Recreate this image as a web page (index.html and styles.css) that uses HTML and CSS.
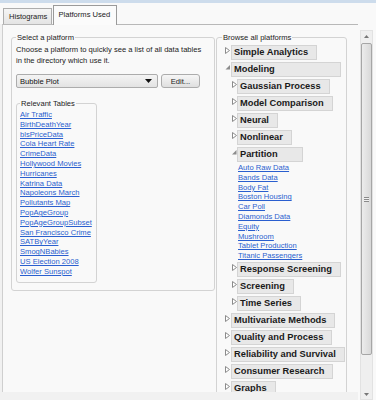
FILE: index.html
```html
<!DOCTYPE html>
<html lang="en">
<head>
    <meta charset="UTF-8">
    <title>Platforms Used</title>
    <link rel="stylesheet" href="styles.css">
</head>
<body>
    <div class="top-strip"></div>
    <div class="window">
        <div class="main">
            <div class="tabs">
                <div class="tab">Histograms</div>
                <div class="tab active">Platforms Used</div>
            </div>
            <div class="panel">
                <fieldset class="select-box">
                    <legend>Select a platform</legend>
                    <p class="intro">Choose a platform to quickly see a list of all data tables in the directory which use it.</p>
                    <div class="combo-row">
                        <div class="combo">
                            <span>Bubble Plot</span>
                            <svg width="7" height="4" viewBox="0 0 7 4"><path d="M0 0 L7 0 L3.5 4 Z" fill="#111"/></svg>
                        </div>
                        <button class="edit-button">Edit...</button>
                    </div>
                    <fieldset class="tables">
                        <legend>Relevant Tables</legend>
                        <ul class="links">
                            <li><a href="#">Air Traffic</a></li>
                            <li><a href="#">BirthDeathYear</a></li>
                            <li><a href="#">blsPriceData</a></li>
                            <li><a href="#">Cola Heart Rate</a></li>
                            <li><a href="#">CrimeData</a></li>
                            <li><a href="#">Hollywood Movies</a></li>
                            <li><a href="#">Hurricanes</a></li>
                            <li><a href="#">Katrina Data</a></li>
                            <li><a href="#">Napoleons March</a></li>
                            <li><a href="#">Pollutants Map</a></li>
                            <li><a href="#">PopAgeGroup</a></li>
                            <li><a href="#">PopAgeGroupSubset</a></li>
                            <li><a href="#">San Francisco Crime</a></li>
                            <li><a href="#">SATByYear</a></li>
                            <li><a href="#">SmogNBabies</a></li>
                            <li><a href="#">US Election 2008</a></li>
                            <li><a href="#">Wolfer Sunspot</a></li>
                        </ul>
                    </fieldset>
                </fieldset>

                <fieldset class="browse">
                    <legend>Browse all platforms</legend>
                    <ul class="tree">
                        <li class="node">
                            <span class="twisty"><svg width="6" height="9" viewBox="0 0 6 9"><path d="M0.5 1.5 L4.5 4.5 L0.5 7.5 Z" fill="#fff" stroke="#8c8c8c"/></svg></span>
                            <span class="head">Simple Analytics</span>
                        </li>
                        <li class="node">
                            <span class="twisty"><svg width="6" height="9" viewBox="0 0 6 9"><path d="M5 2 L5 6.5 L0.5 6.5 Z" fill="#8c8c8c"/></svg></span>
                            <span class="head">Modeling</span>
                            <ul class="tree">
                                <li class="node">
                                    <span class="twisty"><svg width="6" height="9" viewBox="0 0 6 9"><path d="M1.5 1.5 L5.5 4.5 L1.5 7.5 Z" fill="#fff" stroke="#8c8c8c"/></svg></span>
                                    <span class="head">Gaussian Process</span>
                                </li>
                                <li class="node">
                                    <span class="twisty"><svg width="6" height="9" viewBox="0 0 6 9"><path d="M1.5 1.5 L5.5 4.5 L1.5 7.5 Z" fill="#fff" stroke="#8c8c8c"/></svg></span>
                                    <span class="head">Model Comparison</span>
                                </li>
                                <li class="node">
                                    <span class="twisty"><svg width="6" height="9" viewBox="0 0 6 9"><path d="M1.5 1.5 L5.5 4.5 L1.5 7.5 Z" fill="#fff" stroke="#8c8c8c"/></svg></span>
                                    <span class="head">Neural</span>
                                </li>
                                <li class="node">
                                    <span class="twisty"><svg width="6" height="9" viewBox="0 0 6 9"><path d="M1.5 1.5 L5.5 4.5 L1.5 7.5 Z" fill="#fff" stroke="#8c8c8c"/></svg></span>
                                    <span class="head">Nonlinear</span>
                                </li>
                                <li class="node">
                                    <span class="twisty"><svg width="6" height="9" viewBox="0 0 6 9"><path d="M5.5 2 L5.5 6.5 L1 6.5 Z" fill="#8c8c8c"/></svg></span>
                                    <span class="head">Partition</span>
                                    <ul class="links tree-links">
                                        <li><a href="#">Auto Raw Data</a></li>
                                        <li><a href="#">Bands Data</a></li>
                                        <li><a href="#">Body Fat</a></li>
                                        <li><a href="#">Boston Housing</a></li>
                                        <li><a href="#">Car Poll</a></li>
                                        <li><a href="#">Diamonds Data</a></li>
                                        <li><a href="#">Equity</a></li>
                                        <li><a href="#">Mushroom</a></li>
                                        <li><a href="#">Tablet Production</a></li>
                                        <li><a href="#">Titanic Passengers</a></li>
                                    </ul>
                                </li>
                                <li class="node">
                                    <span class="twisty"><svg width="6" height="9" viewBox="0 0 6 9"><path d="M1.5 1.5 L5.5 4.5 L1.5 7.5 Z" fill="#fff" stroke="#8c8c8c"/></svg></span>
                                    <span class="head">Response Screening</span>
                                </li>
                                <li class="node">
                                    <span class="twisty"><svg width="6" height="9" viewBox="0 0 6 9"><path d="M1.5 1.5 L5.5 4.5 L1.5 7.5 Z" fill="#fff" stroke="#8c8c8c"/></svg></span>
                                    <span class="head">Screening</span>
                                </li>
                                <li class="node">
                                    <span class="twisty"><svg width="6" height="9" viewBox="0 0 6 9"><path d="M1.5 1.5 L5.5 4.5 L1.5 7.5 Z" fill="#fff" stroke="#8c8c8c"/></svg></span>
                                    <span class="head">Time Series</span>
                                </li>
                            </ul>
                        </li>
                        <li class="node">
                            <span class="twisty"><svg width="6" height="9" viewBox="0 0 6 9"><path d="M0.5 1.5 L4.5 4.5 L0.5 7.5 Z" fill="#fff" stroke="#8c8c8c"/></svg></span>
                            <span class="head">Multivariate Methods</span>
                        </li>
                        <li class="node">
                            <span class="twisty"><svg width="6" height="9" viewBox="0 0 6 9"><path d="M0.5 1.5 L4.5 4.5 L0.5 7.5 Z" fill="#fff" stroke="#8c8c8c"/></svg></span>
                            <span class="head">Quality and Process</span>
                        </li>
                        <li class="node">
                            <span class="twisty"><svg width="6" height="9" viewBox="0 0 6 9"><path d="M0.5 1.5 L4.5 4.5 L0.5 7.5 Z" fill="#fff" stroke="#8c8c8c"/></svg></span>
                            <span class="head">Reliability and Survival</span>
                        </li>
                        <li class="node">
                            <span class="twisty"><svg width="6" height="9" viewBox="0 0 6 9"><path d="M0.5 1.5 L4.5 4.5 L0.5 7.5 Z" fill="#fff" stroke="#8c8c8c"/></svg></span>
                            <span class="head">Consumer Research</span>
                        </li>
                        <li class="node">
                            <span class="twisty"><svg width="6" height="9" viewBox="0 0 6 9"><path d="M0.5 1.5 L4.5 4.5 L0.5 7.5 Z" fill="#fff" stroke="#8c8c8c"/></svg></span>
                            <span class="head">Graphs</span>
                        </li>
                    </ul>
                </fieldset>
            </div>
        </div>

        <div class="scrollbar">
            <div class="arrow"><svg width="5" height="3" viewBox="0 0 5 3"><path d="M0 3 L5 3 L2.5 0 Z" fill="#777"/></svg></div>
            <div class="track">
                <div class="thumb"><span class="grip"></span></div>
            </div>
            <div class="arrow"><svg width="5" height="3" viewBox="0 0 5 3"><path d="M0 0 L5 0 L2.5 3 Z" fill="#777"/></svg></div>
        </div>
    </div>
</body>
</html>
```

FILE: styles.css
```css
body {
    margin: 0;
    height: 400px;
    overflow: hidden;
    background-color: #f9f9f9;
    font-family: "Liberation Sans", Arial, sans-serif;
    font-size: 7.6px;
    color: #222;
}
.top-strip {
    height: 3px;
    background-color: #cddcec;
}
.window {
    display: flex;
}
.main {
    flex: 1;
    display: flex;
    flex-direction: column;
    height: 397px;
    background-color: #f1f1f1;
}
.tabs {
    display: flex;
    align-items: flex-end;
    height: 21px;
    flex-shrink: 0;
    padding-left: 3px;
    background-color: #f9f9f9;
}
.tab {
    height: 15px;
    line-height: 15px;
    padding: 0 4px 0 5px;
    border: 1px solid #adadad;
    border-bottom: none;
    background: linear-gradient(#f5f5f5, #e4e4e4);
}
.tab.active {
    height: 19px;
    line-height: 17px;
    padding: 0 6px 0 4px;
    margin-left: 1px;
    margin-bottom: -1px;
    border-color: #9a9a9a;
    background: #fbfbfb;
    position: relative;
}
.panel {
    display: flex;
    align-items: flex-start;
    height: 368px;
    flex-shrink: 0;
    margin-left: 2px;
    padding: 7px 0 0 8px;
    box-sizing: border-box;
    border-top: 1px solid #b8b8b8;
    border-left: 1px solid #cfcfcf;
    background-color: #f9f9f9;
    overflow: hidden;
}
fieldset {
    margin: 0;
    border: 1px solid #d3d3d3;
    border-radius: 3px;
    min-width: 0;
    box-sizing: border-box;
}
legend {
    padding: 0 1px;
    line-height: 11px;
}
.select-box {
    width: 204px;
    padding: 1px 4px 7px 4px;
}
.intro {
    margin: 0;
    line-height: 11px;
    padding-right: 4px;
}
.combo-row {
    display: flex;
    align-items: center;
    margin-top: 8px;
}
.combo {
    display: flex;
    align-items: center;
    justify-content: space-between;
    width: 142px;
    height: 14px;
    padding: 0 5px 0 3px;
    box-sizing: border-box;
    border: 1px solid #acacac;
    border-radius: 2px;
    background: linear-gradient(#f4f4f4, #e3e3e3);
    color: #111;
}
.edit-button {
    width: 39px;
    height: 14px;
    margin-left: 3px;
    padding: 0;
    border: 1px solid #acacac;
    border-radius: 3px;
    background: linear-gradient(#f6f6f6, #dfdfdf);
    font-family: inherit;
    font-size: 7.6px;
    color: #222;
}
.tables {
    width: 81px;
    margin-top: 10px;
    padding: 1px 2px 5px 3px;
}
.links {
    list-style: none;
    margin: 0;
    padding: 0;
    line-height: 9.8px;
}
.links a {
    color: #2a5fcf;
    text-decoration: underline;
}
.browse {
    width: 131px;
    margin-left: 1px;
    padding: 2px 0 0 8px;
    height: 420px;
}
.browse legend {
    margin-left: -3px;
}
.tree {
    list-style: none;
    margin: 0;
    padding: 0;
}
.node {
    display: grid;
    grid-template-columns: 6px auto;
    width: max-content;
}
.twisty {
    display: block;
    height: 9px;
    margin-top: 1px;
}
.twisty svg {
    display: block;
}
.head {
    display: block;
    height: 15px;
    margin-bottom: 2px;
    padding: 0 8px 0 2px;
    box-sizing: border-box;
    border: 1px solid #d4d4d4;
    background-color: #e8e8e8;
    font-size: 9.3px;
    font-weight: bold;
    line-height: 13px;
    color: #1a1a1a;
}
.node > .tree,
.node > .tree-links {
    grid-column: 2;
}
.tree-links {
    margin-top: -1px;
    margin-bottom: 1px;
    padding-left: 1px;
    padding-right: 1px;
}
.scrollbar {
    display: flex;
    flex-direction: column;
    width: 13px;
    height: 370px;
    margin: 27px 3px 0 2px;
    box-sizing: border-box;
    border: 1px solid #e2e2e2;
    background-color: #efefef;
}
.arrow {
    display: flex;
    justify-content: center;
    align-items: center;
    height: 10px;
}
.track {
    flex: 1;
    padding: 2px 0 34px 0;
}
.thumb {
    display: flex;
    align-items: center;
    justify-content: center;
    height: 100%;
    border: 1px solid #a6a6a6;
    border-radius: 2px;
    box-sizing: border-box;
    background: linear-gradient(90deg, #ececec, #d8d8d8);
}
.grip {
    width: 5px;
    height: 5px;
    border-top: 1px solid #8a8a8a;
    border-bottom: 1px solid #8a8a8a;
    box-sizing: border-box;
    background: linear-gradient(#f0f0f0 40%, #8a8a8a 40%, #8a8a8a 60%, #f0f0f0 60%);
}
```
